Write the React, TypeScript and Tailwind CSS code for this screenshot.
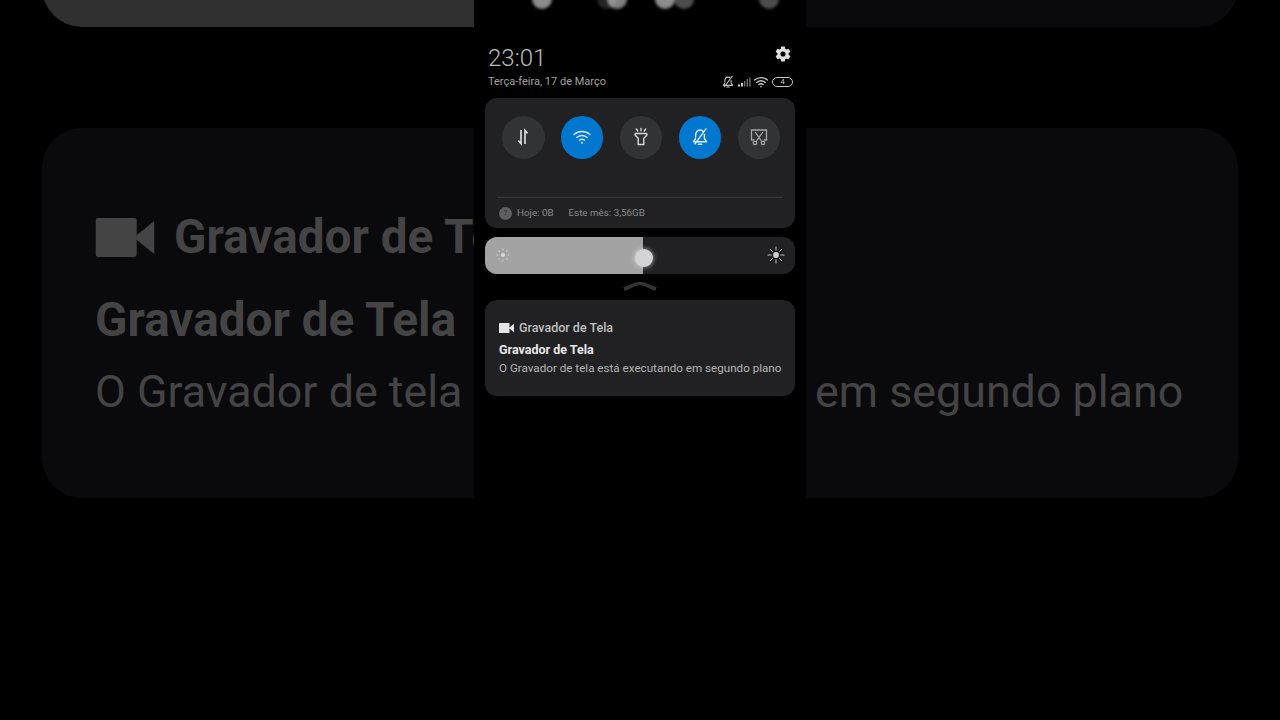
import React from 'react';

const ROBOTO = "font-['Roboto',sans-serif]";

// blurred light spots at the top edge of the phone
const spots = [
  { x: 68, o: 0.55 },
  { x: 133, o: 0.14 },
  { x: 143, o: 0.5 },
  { x: 191, o: 0.55 },
  { x: 210, o: 0.3 },
  { x: 295, o: 0.3 },
];

const Toggle = ({ on, children }: { on?: boolean; children: React.ReactNode }) => (
  <div className={`w-[42.5px] h-[42.5px] rounded-full flex items-center justify-center ${on ? 'bg-[#0277cf]' : 'bg-[#323335]'}`}>
    {children}
  </div>
);

const VideoIcon = ({ className }: { className: string }) => (
  <svg viewBox="0 0 30 20" className={className} fill="currentColor">
    <rect x="0" y="0" width="21" height="20" rx="1.2" />
    <path d="M19.5 10 L30 1.5 V18.5 Z" />
  </svg>
);

const WifiIcon = ({ size, sw }: { size: number; sw: number }) => (
  <svg width={size} height={size} viewBox="0 0 20 20" fill="none" stroke="currentColor" strokeWidth={sw} strokeLinecap="round">
    <path d="M2 7.5 C6.5 3.5 13.5 3.5 18 7.5" />
    <path d="M4.8 10.5 C8 8 12 8 15.2 10.5" />
    <path d="M7.4 13.2 C9 12 11 12 12.6 13.2" />
    <circle cx="10" cy="15.8" r="1" fill="currentColor" stroke="none" />
  </svg>
);

const BellOff = ({ size, sw }: { size: number; sw: number }) => (
  <svg width={size} height={size} viewBox="0 0 20 20" fill="none" stroke="currentColor" strokeWidth={sw} strokeLinecap="round" strokeLinejoin="round">
    <path d="M5.6 10 V8.5 C5.6 5.2 7.6 3 10 3 C11.3 3 12.5 3.6 13.3 4.6" />
    <path d="M14.4 7.5 V11.5 L16.6 14.8 H3.4 L5.6 11.5" />
    <path d="M8.2 17.2 H11.8" />
    <path d="M16 1.8 L5 16.8" />
  </svg>
);

const Sun = ({ size, r, sw, dotted }: { size: number; r: number; sw: number; dotted?: boolean }) => (
  <svg width={size} height={size} viewBox="0 0 20 20" stroke="currentColor" strokeWidth={sw} strokeLinecap="round" fill="none">
    <circle cx="10" cy="10" r={r} fill="currentColor" stroke="none" />
    {[0, 45, 90, 135, 180, 225, 270, 315].map(a => (
      <line key={a} x1="10" y1={dotted ? 2.6 : 1} x2="10" y2={dotted ? 3.6 : 4.6} transform={`rotate(${a} 10 10)`} />
    ))}
  </svg>
);

const Gear = () => (
  <svg width="18" height="18" viewBox="0 0 24 24" fill="currentColor">
    <path fillRule="evenodd" d="M19.43 12.98c.04-.32.07-.64.07-.98s-.03-.66-.07-.98l2.11-1.65a.5.5 0 0 0 .12-.64l-2-3.46a.5.5 0 0 0-.61-.22l-2.49 1a7.3 7.3 0 0 0-1.69-.98l-.38-2.65A.49.49 0 0 0 14 2h-4a.49.49 0 0 0-.49.42l-.38 2.65c-.61.25-1.17.59-1.69.98l-2.49-1a.49.49 0 0 0-.61.22l-2 3.46a.49.49 0 0 0 .12.64l2.11 1.65c-.04.32-.07.65-.07.98s.03.66.07.98l-2.11 1.65a.5.5 0 0 0-.12.64l2 3.46c.12.22.39.3.61.22l2.49-1c.52.4 1.08.73 1.69.98l.38 2.65c.03.24.24.42.49.42h4c.25 0 .46-.18.49-.42l.38-2.65c.61-.25 1.17-.59 1.69-.98l2.49 1c.23.09.49 0 .61-.22l2-3.46a.5.5 0 0 0-.12-.64l-2.11-1.65zM12 15.4a3.4 3.4 0 1 1 0-6.8 3.4 3.4 0 0 1 0 6.8z" />
  </svg>
);

const App = () => {
  return (
    <div className={`relative w-[1280px] h-[720px] bg-black overflow-hidden flex ${ROBOTO}`}>
      {/* blurred copy of the notification, left of the phone */}
      <div className="w-[474px] h-[720px] flex flex-col">
        <div className="mt-[-40px] ml-[42px] h-[67px] rounded-bl-[40px] bg-[#303030]" />
        <div className="mt-[101px] ml-[42px] h-[370px] rounded-l-[40px] bg-[#0a0a0c] pl-[53px] pt-[84px] text-[#444444] overflow-hidden">
          <div className="flex items-center h-[50px]">
            <VideoIcon className="w-[60px] h-[39px] shrink-0" />
            <div className="ml-[19px] text-[47.7px] leading-[50px] font-bold whitespace-nowrap">Gravador de Te</div>
          </div>
          <div className="mt-[33px] text-[47.7px] leading-[50px] font-bold whitespace-nowrap">Gravador de Tela</div>
          <div className="mt-[22px] text-[44.8px] leading-[50px] whitespace-nowrap">O Gravador de tela</div>
        </div>
      </div>

      {/* phone column */}
      <div className="relative w-[332px] h-[720px] bg-black px-[11px]">
        {spots.map(s => (
          <div
            key={s.x}
            className="absolute top-[-11px] w-[20px] h-[20px] rounded-full bg-white blur-[1.5px]"
            style={{ left: s.x - 10, opacity: s.o }}
          />
        ))}

        <div className="pt-[44px] flex items-start justify-between pl-[3px] pr-[3px]">
          <div className="text-[24px] leading-[28px] font-light text-[#bdbdbd]">23:01</div>
          <div className="text-[#dedede] mt-[1px]"><Gear /></div>
        </div>
        <div className="mt-[3px] flex items-center justify-between pl-[3px] pr-[2px] h-[14px]">
          <div className="text-[11px] leading-[14px] text-[#a0a0a0]">Terça-feira, 17 de Março</div>
          <div className="flex items-center text-[#c8c8c8] mb-[1px]">
            <BellOff size={14} sw={1.5} />
            <svg width="13" height="10" viewBox="0 0 13 10" className="ml-[3px]" fill="#6f6f6f">
              <rect x="0" y="7.5" width="2" height="2" fill="#d0d0d0" />
              <rect x="3" y="6" width="2" height="3.5" fill="#d0d0d0" />
              <rect x="6" y="4" width="1.4" height="5.5" />
              <rect x="8.6" y="2" width="1.4" height="7.5" />
              <rect x="11.2" y="0.5" width="1.4" height="9" />
            </svg>
            <div className="ml-[2px]"><WifiIcon size={16} sw={1.7} /></div>
            <div className="ml-[3px] w-[21px] h-[10px] rounded-full border border-[#c8c8c8] flex items-center justify-center text-[7.5px] leading-none">4</div>
          </div>
        </div>

        {/* quick toggles */}
        <div className="mt-[9px] h-[130px] rounded-[12px] bg-[#212124] px-[12px]">
          <div className="pt-[18px] pl-[5px] pr-[3px] flex justify-between h-[99px] text-[#d8d8d8]">
            <Toggle>
              <svg width="20" height="20" viewBox="0 0 20 20" fill="none" stroke="currentColor" strokeWidth="1.7">
                <path d="M8 3 V16.5 L5.4 13.6" />
                <path d="M12 17 V3.5 L14.6 6.4" />
              </svg>
            </Toggle>
            <Toggle on>
              <span className="text-[#cfe6f7]"><WifiIcon size={20} sw={1.4} /></span>
            </Toggle>
            <Toggle>
              <svg width="20" height="20" viewBox="0 0 20 20" fill="none" stroke="currentColor" strokeWidth="1.4" strokeLinejoin="round" strokeLinecap="round">
                <path d="M4.2 6.5 H15.8 V8.2 L12.8 11.2 V17.5 H7.2 V11.2 L4.2 8.2 Z" />
                <path d="M10 1.5 V3.8 M5.3 2 L6.8 4 M14.7 2 L13.2 4" />
              </svg>
            </Toggle>
            <Toggle on>
              <span className="text-[#e4f0fa]"><BellOff size={20} sw={1.4} /></span>
            </Toggle>
            <Toggle>
              <svg width="20" height="20" viewBox="0 0 20 20" fill="none" stroke="#a8a8a8" strokeWidth="1.3" strokeLinecap="round">
                <path d="M4.8 13 H2.5 V3 H17.5 V13 H15.2" />
                <path d="M6.5 5.5 L12.8 14.5 M13.5 5.5 L7.2 14.5" />
                <circle cx="6" cy="16" r="1.7" />
                <circle cx="14" cy="16" r="1.7" />
              </svg>
            </Toggle>
          </div>
          <div className="border-t border-[#38383a] h-[31px] flex items-center text-[9.8px] leading-none text-[#8a8a8a]">
            <div className="ml-[2px] w-[13px] h-[13px] rounded-full bg-[#5f5f5f] flex items-center justify-center text-[8px] text-[#3a3a3a] font-bold">?</div>
            <span className="ml-[5px]">Hoje: 0B</span>
            <span className="ml-[15px]">Este mês: 3,56GB</span>
          </div>
        </div>

        {/* brightness */}
        <div className="relative mt-[9px] h-[37px] rounded-[12px] bg-[#212124] overflow-hidden flex">
          <div className="w-[158px] bg-[#a3a3a3]" />
          <div className="flex-1" />
          <div className="absolute left-[10px] top-[10px] text-[#d8d8d8]"><Sun size={16} r={2.6} sw={1.3} dotted /></div>
          <div className="absolute left-[282px] top-[9px] text-[#d0d0d0]"><Sun size={18} r={3.2} sw={1} /></div>
          <div className="absolute left-[150px] top-[12px] w-[18px] h-[18px] rounded-full bg-[#d4d4d8] shadow-[0_0_4px_1px_rgba(255,255,255,0.45)]" />
        </div>

        {/* collapse handle */}
        <div className="mt-[7px] h-[10px] flex justify-center">
          <svg width="34" height="10" viewBox="0 0 34 10" fill="none" stroke="#333335" strokeWidth="3.5">
            <path d="M1 8 C7 6.5 11 2.5 17 2.5 C23 2.5 27 6.5 33 8" />
          </svg>
        </div>

        {/* notification */}
        <div className="mt-[9px] h-[96px] rounded-[12px] bg-[#212124] pl-[14px] pt-[20px]">
          <div className="flex items-center h-[16px] text-[#c0c0c0]">
            <VideoIcon className="w-[15px] h-[10px] text-[#e4e4e4]" />
            <div className="ml-[5px] text-[12.5px] leading-[16px] font-medium whitespace-nowrap">Gravador de Tela</div>
          </div>
          <div className="mt-[6px] text-[12.5px] leading-[16px] font-bold text-[#e8e8e8] whitespace-nowrap">Gravador de Tela</div>
          <div className="mt-[2px] text-[11.65px] leading-[16px] text-[#b4b4b4] whitespace-nowrap">O Gravador de tela está executando em segundo plano</div>
        </div>
      </div>

      {/* right of the phone */}
      <div className="w-[474px] h-[720px] flex flex-col">
        <div className="mt-[-40px] mr-[42px] h-[67px] rounded-br-[40px] bg-[#0a0a0c]" />
        <div className="mt-[101px] mr-[42px] h-[370px] rounded-r-[40px] bg-[#0a0a0c] pl-[9px] pt-[239px] text-[#444444]">
          <div className="text-[44.8px] leading-[50px] whitespace-nowrap">em segundo plano</div>
        </div>
      </div>
    </div>
  );
};

export default App;
